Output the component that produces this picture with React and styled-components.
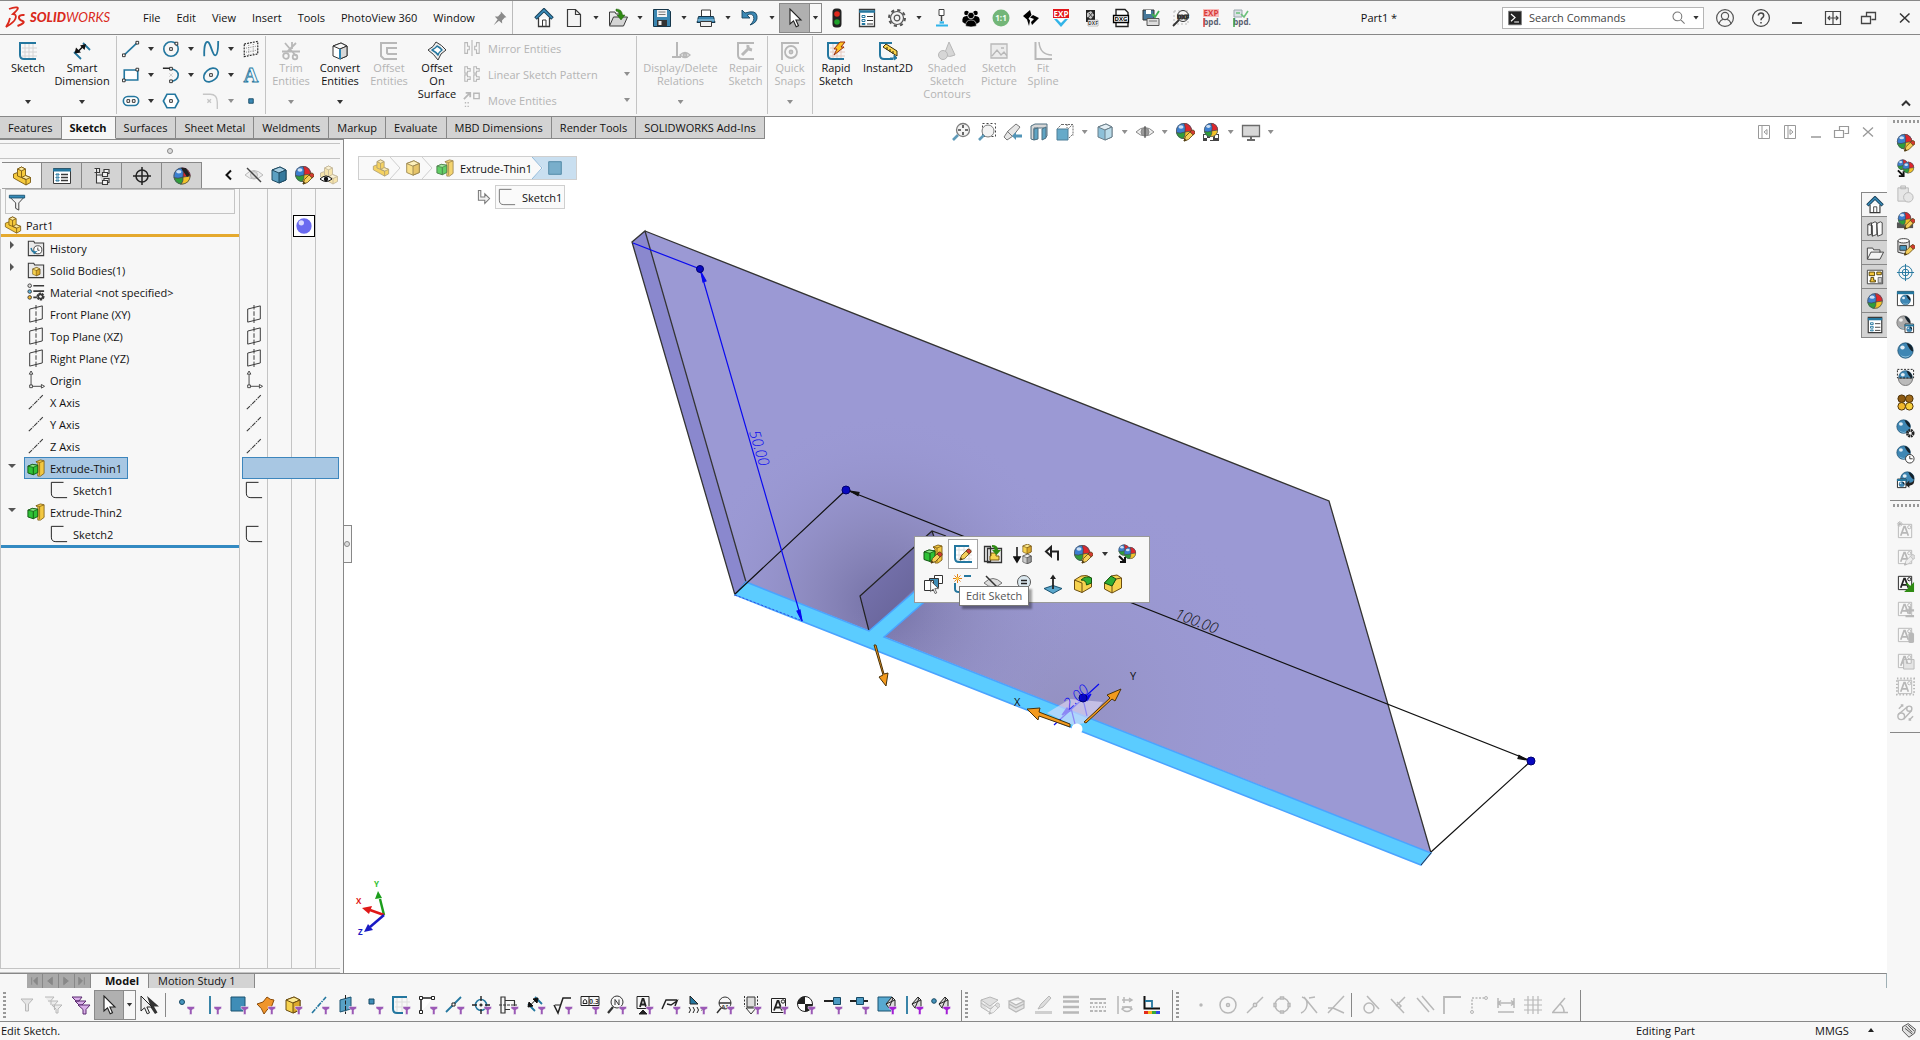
import React from 'react';
import styled, { createGlobalStyle } from 'styled-components';

const ink = '#3a3a3a';
const blue = '#24779f';
const grey = '#b8b8b8';

/* ---------- shared icon parts ---------- */

const Funnel = ({ color = '#9b59b6' }) => (
  <path d="M12 11.5h7.5v2L17 15v4.5h-2.5V15L12 13.5z" fill={color} stroke="#f7f7f7" strokeWidth=".5" />
);

const Ball = ({ x = 10, y = 10, r = 8 }) => (
  <g transform={`translate(${x} ${y}) scale(${r / 8})`}>
    <circle r="8" fill="#3b7fd0" />
    <path d="M0 -8A8 8 0 0 1 8 0L1 1Q2 -4 0 -8Z" fill="#e0262c" />
    <path d="M-7.8 1.5Q-4 3 1 1Q1.5 5 -1 8A8 8 0 0 1 -7.8 1.5Z" fill="#2f9e3a" />
    <path d="M1 1L8 0A8 8 0 0 1 -1 8Q1.5 5 1 1Z" fill="#f2c329" />
    <path d="M0 -8Q2 -4 1 1Q-4 3 -7.8 1.5M1 1L8 0M1 1Q1.5 5 -1 8" fill="none" stroke="#444" strokeWidth=".7" />
    <circle r="7.6" fill="none" stroke="#555" strokeWidth=".8" />
    <ellipse cx="-3" cy="-4" rx="2.5" ry="1.7" fill="#fff" opacity=".75" />
  </g>
);

const BlueBall = ({ x = 10, y = 10, r = 8, color = '#3f87b4', edge = '#1d4f70' }) => (
  <g transform={`translate(${x} ${y}) scale(${r / 8})`}>
    <circle r="7.6" fill={color} stroke={edge} strokeWidth=".8" />
    <path d="M1 -7.5A7.6 7.6 0 0 1 7.5 1Q4 0 1 -7.5Z" fill="#14212b" />
    <path d="M-5.5 4Q0 8 5.5 4Q3 7 0 7T-5.5 4Z" fill="#8fc1dc" />
    <ellipse cx="-3" cy="-3" rx="2.2" ry="2" fill="#fff" opacity=".85" />
  </g>
);

const Pencil = ({ x = 0, y = 0, dim }) => (
  <g transform={`translate(${x} ${y})`} stroke={dim ? grey : '#5b4310'} strokeWidth=".8">
    <path d="M9 19l1.5-4.5 6-6 3 3-6 6z" fill={dim ? '#eee' : '#f5cf5b'} />
    <path d="M15 10l1.8-1.8q1-.8 2.5.6t.7 2.4L18.2 13z" fill={dim ? '#ddd' : '#d23b32'} />
    <path d="M9 19l.7-2.2 1.6 1.6z" fill={dim ? grey : '#222'} />
  </g>
);

const Cube = ({ top = '#fde98f', left = '#f6d24f', right = '#dba92b', edge = '#6b4d12', x = 0, y = 0, s = 1 }) => (
  <g transform={`translate(${x} ${y}) scale(${s})`} stroke={edge} strokeWidth="1" strokeLinejoin="round">
    <path d="M3 5l8-3 6 3v10l-7 3-7-3z" fill={left} />
    <path d="M3 5l8-3 6 3-7 3z" fill={top} />
    <path d="M10 8l7-3v10l-7 3z" fill={right} />
  </g>
);

const PartShape = ({ faded }) => (
  <g stroke={faded ? '#9a8650' : '#7b5a12'} strokeWidth=".9" strokeLinejoin="round" opacity={faded ? 0.8 : 1}>
    <path d="M1.5 8l4-1.5V3l4-2 4 2v6.500l5 2v5l-4.500 2.500L1.500 12z" fill="#f5c93c" />
    <path d="M5.500 3l4-2 4 2-4 1.800zM9.500 11.500l4-2 5 2-4.500 2z" fill="#fdeaa0" />
    <path d="M9.500 4.800v6.700l4.500 2V19M5.500 6.500V10l4 1.500" fill="none" />
  </g>
);

const Extrude = ({ faded }) => (
  <g strokeLinejoin="round" opacity={faded ? 0.75 : 1}>
    <path d="M10 3l5-2 4 1v14l-4 3h-3V5z" fill="#f3c842" stroke="#7b5a12" strokeWidth=".9" />
    <path d="M10 3l4 1 5-2M14 4v14" fill="none" stroke="#7b5a12" strokeWidth=".8" />
    <path d="M1 8l5-2 6 1v8l-5 2.5-6-2z" fill="#2fc136" stroke="#10540f" />
    <path d="M1 8l5-2 6 1-5 2.2z" fill="#8ceb88" stroke="#10540f" strokeWidth=".8" />
    <path d="M7 9.2v8.3" stroke="#10540f" />
  </g>
);

const NoteBox = ({ color = grey, fill = 'none' }) => (
  <g fill={fill} stroke={color}>
    <path d="M2.5 3.5h14v14h-14z" />
    <path d="M5 15.5L8.5 6h1l3.5 9.5M6.5 12.5h5" strokeWidth="1.8" fill="none" />
    <circle cx="14" cy="6.5" r="1.7" />
  </g>
);

const Letters = ({ x, y, size = 7, color = ink, children }) => (
  <text x={x} y={y} fontSize={size} fontWeight="700" fill={color} textAnchor="middle">
    {children}
  </text>
);

const cursorPath = 'M5 1v15l3.5-3.2 2.7 6 2.3-1-2.6-5.8H16z';

const icons = {
  home: (
    <g fill="none" stroke={ink}>
      <path d="M4.5 10v8.5h11V10" fill="#fff" strokeWidth="1.3" />
      <path d="M8.5 18v-6H12v6" />
      <path d="M1.5 10.5L10 2l8.5 8.5" stroke="#173f58" strokeWidth="3.6" />
      <path d="M2 10l8-7.8 8 7.8" stroke="#3b8fbd" strokeWidth="1.6" />
    </g>
  ),
  file: <path d="M3.500 1.5h8l5 5v12h-13zM11.500 1.5v5h5" fill="#f4f4f4" stroke={ink} strokeWidth="1.2" />,
  open: (
    <g stroke={ink} strokeLinejoin="round">
      <path d="M1.500 17V4H7l1 2h5v3" fill="#e6e6e6" />
      <path d="M1.500 18l4-9h14l-4 9z" fill="#d5d5d5" />
      <path d="M8 1q6 0 6.500 6H17l-4 5-4-5h2.500Q11 3.500 8 3z" fill="#2f8b13" stroke="#1c5a08" strokeWidth=".5" />
    </g>
  ),
  save: (
    <g>
      <path d="M1.500 1.500h15l2 2v15h-17z" fill="#3a86b1" stroke="#16364a" />
      <path d="M5 2h10v7H5z" fill="#f3f3f3" />
      <path d="M6.500 4h7M6.500 6.500h7" stroke="#777" />
      <path d="M5 12h10v6H5z" fill="#333" />
      <path d="M6.500 13h3v4h-3z" fill="#eee" />
    </g>
  ),
  print: (
    <g stroke={ink}>
      <path d="M5.500 8V2h9v6" fill="#fff" />
      <path d="M2.500 8.500h15l1.500 6H1z" fill="#3a86b1" stroke="#16364a" />
      <path d="M4.500 13.500h11v5h-11z" fill="#f1f1f1" />
      <path d="M1 12h18" stroke="#a6d2e8" />
    </g>
  ),
  undo: <path d="M2 2v8h8L7.200 7.200Q12 4.500 13.500 8.500T10 17q8-2.500 7-9T5 5z" fill="#3b89b6" stroke="#16445f" strokeWidth=".9" />,
  cursor: <path d={cursorPath} fill="#fff" stroke="#222" strokeWidth="1.100" />,
  cursors: (
    <g>
      <path d="M7 1l12 10.500h-5l3.500 6-2.500 1.500-4-6z" fill="#333" />
      <path d={cursorPath} fill="#eee" stroke="#222" transform="translate(-4 0)" />
    </g>
  ),
  lights: (
    <g>
      <rect x="5.500" y=".5" width="9" height="19" rx="3.500" fill="#222" />
      <circle cx="10" cy="6" r="2.800" fill="#e0281c" />
      <circle cx="10" cy="14" r="2.800" fill="#1fa12a" />
    </g>
  ),
  list: (
    <g fill="none" stroke={ink}>
      <path d="M2.500 1.500h15v17h-15z" fill="#fff" strokeWidth="1.300" />
      <path d="M2 3.500h16" stroke={blue} strokeWidth="2.500" />
      <path d="M5 7.500h3v2H5zM5 11.500h3v2H5zM5 15.500h3v1H5z" stroke={blue} />
      <path d="M10 8.500h6M10 12.500h6M10 16h6" />
    </g>
  ),
  gear: (
    <g fill="none" stroke="#555">
      <circle cx="10" cy="10" r="8" strokeWidth="2" strokeDasharray="3.200 3.080" />
      <circle cx="10" cy="10" r="6.500" fill="#f4f4f4" strokeWidth="1.200" />
      <circle cx="10" cy="10" r="2.800" strokeWidth="1.200" />
    </g>
  ),
  press: (
    <g>
      <path d="M8 1.500h5v6H8z" fill="#fff" stroke="#444" />
      <path d="M10.500 8v5" stroke="#444" strokeWidth="1.500" />
      <path d="M8 13h5v3H8z" fill="#b7dff2" />
      <path d="M5 17.500h12M9 14.500h4" stroke="#2fb4ea" strokeWidth="2" />
    </g>
  ),
  people: (
    <g fill="#000">
      <circle cx="5.500" cy="5" r="2.300" /><circle cx="14.500" cy="5" r="2.300" />
      <path d="M1.500 14q-1-6 4-6h9q5 0 4 6l-3 2h-11z" />
      <circle cx="10" cy="7.500" r="3.300" stroke="#f7f7f7" strokeWidth=".8" />
      <path d="M4.500 18q0-6 5.500-6t5.500 6q-5.500 2-11 0z" stroke="#f7f7f7" strokeWidth=".6" />
    </g>
  ),
  oneToOne: (
    <g>
      <circle cx="10" cy="10" r="8.500" fill="#73b678" />
      <Letters x="10" y="13" size="8" color="#f4fff4">1:1</Letters>
    </g>
  ),
  sparrow: (
    <g fill="#000">
      <path d="M2 8l7-6 1.500 5-3 3.500 1.500 2L8 18l-2-6.500z" />
      <path d="M9 9.500L12 7l6 3-7 7-1-3 3-3z" />
    </g>
  ),
  exp: (
    <g>
      <path d="M2 1h16v9H2z" fill="#e3161b" />
      <Letters x="10" y="8.500" size="8" color="#fff">EXP</Letters>
      <path d="M3 11h14l-7 8z" fill="#32b4e8" />
      <path d="M6 11h8l-4 4z" fill="#fff" />
    </g>
  ),
  sheetDoc: (
    <g>
      <path d="M5 2h9v12H5z" fill="#222" />
      <path d="M6 5l4-2 3 4-3 4-4-2z" fill="#c5c5c5" />
      <path d="M8 5l4 5M12 4l-5 6" stroke="#444" />
      <path d="M7 12h10v6H7z" fill="#fff" stroke="#999" strokeWidth=".6" />
      <Letters x="12" y="17" size="5">DXF</Letters>
    </g>
  ),
  dwgDoc: (
    <g>
      <path d="M5 1.500h9l3 3v14H5z" fill="#fff" stroke="#222" strokeWidth="1.400" />
      <path d="M2.500 7.500h15v7h-15z" fill="#fff" stroke="#000" strokeWidth="1.300" />
      <Letters x="10" y="13" size="6" color="#000">DXG</Letters>
    </g>
  ),
  saveCheck: (
    <g>
      <path d="M2 2h11v10H2z" fill="#47799b" stroke="#333" />
      <path d="M5 2h5v4H5z" fill="#fff" />
      <path d="M6 10.500h12v7H6z" fill="#ddd" stroke="#555" />
      <path d="M8 13h8" stroke="#777" />
      <path d="M11 6l3 3 4-6" fill="none" stroke="#3fae52" strokeWidth="1.800" />
    </g>
  ),
  dxfSearch: (
    <g fill="none" stroke="#333">
      <path d="M3 3h14v13H3z" stroke="#bbb" strokeDasharray="2 2" />
      <circle cx="12" cy="8" r="5.500" fill="#f7f7f7" />
      <path d="M8 12l-6 6" strokeWidth="1.800" />
      <Letters x="12" y="10.500" size="6">DXF</Letters>
    </g>
  ),
  expBpd: (
    <g>
      <path d="M2 1h16v8H2z" fill="#f8b9b9" />
      <Letters x="10" y="8" size="8" color="#d83b3b">EXP</Letters>
      <Letters x="11" y="17" size="8" color="#5a6070">bpd.</Letters>
      <path d="M3 10v9" stroke="#d44" strokeWidth="1.500" />
    </g>
  ),
  checkBpd: (
    <g>
      <path d="M3 2h8v7H3z" fill="#dbe1e5" stroke="#9aa6ad" />
      <path d="M10 6l3 3 4-6M5 5h4" fill="none" stroke="#6cc17b" strokeWidth="1.600" />
      <Letters x="11" y="17" size="8" color="#5a6070">bpd.</Letters>
      <path d="M3 10v9" stroke="#3aa04a" strokeWidth="1.500" />
    </g>
  ),
  pin: <path d="M11 2l7 7-2 .5-3.500 3.500.2 4-4-3.700L2 19l5-7.200L3.500 8l4 .2L11 4.500z" fill="#8a8a8a" />,
  user: (
    <g fill="none" stroke="#555" strokeWidth="1.200">
      <circle cx="10" cy="10" r="8.400" />
      <circle cx="10" cy="8" r="3.600" />
      <path d="M4 16q1-4 4-4.500M16 16q-1-4-4-4.500" />
    </g>
  ),
  help: (
    <g fill="none" stroke="#444" strokeWidth="1.500">
      <circle cx="10" cy="10" r="8.400" strokeWidth="1.200" />
      <path d="M7.300 7.500q.4-2.500 2.700-2.500 2.700 0 2.700 2.400 0 1.500-1.500 2.400-1.200.8-1.200 2.500M10 14v1.600" />
    </g>
  ),
  minimize: <path d="M5 15h10" stroke="#444" strokeWidth="2" />,
  resize: <path d="M2.500 3.500h15v13h-15zM10 3.500v13M4.500 10h11M7 8l-2 2 2 2M13 8l2 2-2 2" fill="none" stroke="#444" strokeWidth="1.200" />,
  restore: <path d="M2.500 8.500h9v7h-9zM7.500 8V4.500h9v7h-4" fill="none" stroke="#444" strokeWidth="1.300" />,
  close: <path d="M5 5.500l9.500 9M14.500 5.500l-9.500 9" stroke="#333" strokeWidth="1.500" />,
  terminal: (
    <g>
      <path d="M2 1.500h16v17H2z" fill="#222" stroke="#777" />
      <path d="M5 5l5 4.500L5 14M9 15h6" fill="none" stroke="#fff" strokeWidth="1.500" />
    </g>
  ),
  search: <path d="M12 12l5 5M13.500 8a5.500 5.500 0 1 1-11 0a5.500 5.500 0 1 1 11 0z" fill="none" stroke="#777" strokeWidth="1.300" />,
  chevronUp: <path d="M6 12.500l4-4 4 4" fill="none" stroke="#333" strokeWidth="2" />,
  chevronLeft: <path d="M12 5.500L7.500 10l4.500 4.500" fill="none" stroke="#111" strokeWidth="2" />,

  /* ribbon */
  sketch: (
    <g fill="none">
      <path d="M7 3v14M11 3v14M15 3v14M4 7h15M4 11h15M4 15h15" stroke="#d4d4d4" />
      <path d="M18 2H2v12q0 4 4 4h12" stroke={blue} strokeWidth="2" />
    </g>
  ),
  smartDim: (
    <g fill="none">
      <path d="M2 11l7 7M11 2l7 7" stroke={blue} strokeWidth="1.800" />
      <path d="M5 11.500l7-7" stroke="#111" strokeWidth="1.600" />
      <path d="M2.500 12.500l1.500-6 5 5zM14 3L8 4.500 12.500 9z" fill="#111" />
    </g>
  ),
  line: (
    <g fill="#fff" stroke="#222">
      <path d="M2 17L17 3" stroke={blue} strokeWidth="1.800" />
      <path d="M.5 15.500h3v3h-3zM15.500 1.500h3v3h-3z" />
    </g>
  ),
  circle: (
    <g fill="none" stroke="#222">
      <circle cx="10" cy="10" r="8" stroke={blue} strokeWidth="1.800" />
      <path d="M8.500 8.500h3v3h-3zM14.500 2.500h3v3h-3z" fill="#fff" />
    </g>
  ),
  spline: <path d="M2.500 18C2 4 5 0 7.500 3S12 17 14.500 17 18 12 18 1" fill="none" stroke={blue} strokeWidth="2" />,
  planeGrid: (
    <g fill="none" stroke="#222">
      <path d="M2.500 4.500l15-3v14l-15 3z" strokeWidth="1.300" strokeDasharray="2 1.300" />
      <path d="M7.500 3v15M12.500 2v15M2 9.500l16-3M2 14l16-3" stroke="#777" strokeDasharray="1 1.500" />
    </g>
  ),
  rect: (
    <g fill="#fff" stroke="#222">
      <path d="M2.500 4.500h15v11h-15z" stroke={blue} strokeWidth="1.800" />
      <path d="M.5 14.500h3v3h-3zM15.500 2.500h3v3h-3z" />
    </g>
  ),
  arc: (
    <g fill="none" stroke="#222">
      <path d="M1 2.500h8" strokeWidth="1.600" />
      <path d="M10 3q8 1.500 8 7t-8 7.500" stroke={blue} strokeWidth="1.800" />
      <path d="M8.500 1.500h3v3h-3zM8.500 15.500h3v3h-3z" fill="#fff" />
      <path d="M8 8l4 4M12 8l-4 4" stroke="#ccc" />
    </g>
  ),
  ellipse: (
    <g fill="none" stroke="#222">
      <ellipse cx="10" cy="10" rx="9" ry="6.500" transform="rotate(-40 10 10)" stroke={blue} strokeWidth="1.800" />
      <path d="M8.500 8.500h3v3h-3z" fill="#fff" />
    </g>
  ),
  textA: (
    <text x="10" y="18" textAnchor="middle" fontFamily="'Liberation Serif', serif" fontSize="23" fontWeight="700" fill="#f4fafd" stroke={blue} strokeWidth=".9">
      A
    </text>
  ),
  slot: (
    <g fill="#fff" stroke="#222">
      <rect x="1.500" y="5" width="17" height="10" rx="5" stroke={blue} strokeWidth="1.800" />
      <path d="M5.500 8.500h3v3h-3zM11.500 8.500h3v3h-3z" />
    </g>
  ),
  polygon: (
    <g fill="#fff" stroke="#222">
      <path d="M5.500 2.500h9l4 7.500-4 7.500h-9L1.500 10z" stroke={blue} strokeWidth="1.800" />
      <path d="M8.500 8.500h3v3h-3z" />
    </g>
  ),
  filletOff: <path d="M1 2.500h8q8 0 8 9V19M6 8l4 4M10 8l-4 4" fill="none" stroke="#c6c6c6" strokeWidth="1.500" />,
  point: <path d="M7.500 7.500h5v5h-5z" fill="#3b89b6" stroke="#174964" />,
  trim: (
    <g fill="none" stroke={grey} strokeWidth="1.800">
      <path d="M4 2l11 13M15 2L6 11M1 10.500h18M11 1v7" />
      <circle cx="5" cy="15" r="2.800" /><circle cx="14" cy="16" r="2.300" />
    </g>
  ),
  convert: (
    <g>
      <Cube top="#f8f8f8" left="#fff" right="#d7d7d7" edge="#333" />
      <path d="M10 8v10" stroke="#2c87b5" strokeWidth="2" />
    </g>
  ),
  offset: <path d="M18 2H2v13l3 3h13M18 7H8v5l1 1h9" fill="none" stroke={grey} strokeWidth="2" />,
  offsetSurface: (
    <g strokeLinejoin="round">
      <path d="M1 9q6-3 8-8 6 3 10 8-6 3-8 10-4-6-10-10z" fill="#eee" stroke={ink} />
      <path d="M5 9q4-2 5-4 3 1.500 5 4-3 2-4 5-2-3-6-5z" fill="#fff" stroke={blue} strokeWidth="1.500" />
    </g>
  ),
  mirror: <path d="M10 1v18M2 4h3v4h2v4H5v4H2zM18 4h-3v4h-2v4h2v4h3z" fill="none" stroke={grey} strokeWidth="1.200" />,
  pattern: (
    <g fill="none" stroke={grey} strokeWidth="1.200">
      <path d="M2 2h3v2h3v3H5v2H2zM12 2h3v2h3v3h-3v2h-3zM2 11h3v2h3v3H5v2H2zM12 11h3v2h3v3h-3v2h-3z" />
    </g>
  ),
  move: (
    <g fill="none" stroke={grey} strokeWidth="1.500">
      <path d="M1 9l6-6M3 2h5v5" strokeWidth="2" /><path d="M12 2.500h6v6h-6z" />
      <path d="M2 13h6M2 17h6" strokeDasharray="1.500 1.500" />
    </g>
  ),
  relations: (
    <g fill="none" stroke={grey} strokeWidth="2">
      <path d="M6 1v15M1 16h9" />
      <path d="M9 14q5-5 10 0-5 5-10 0z" strokeWidth="1.300" fill="#f7f7f7" />
      <circle cx="14" cy="14" r="1.500" />
    </g>
  ),
  repair: (
    <g fill="none" stroke={grey} strokeWidth="2">
      <path d="M18 2H2v12q0 4 4 4h12" />
      <path d="M6 14l7-7M12 4q-1 4 4 5" strokeWidth="3" />
    </g>
  ),
  snaps: (
    <g fill="none" stroke={grey} strokeWidth="1.800">
      <path d="M1 2h18M2 2v17" /><circle cx="11" cy="11" r="6" /><circle cx="11" cy="11" r="1.500" />
    </g>
  ),
  rapid: (
    <g fill="none">
      <path d="M7 3v14M11 3v14M15 3v14M4 7h15M4 11h15M4 15h15" stroke="#e6c9c0" />
      <path d="M18 2H2v12q0 4 4 4h12" stroke={blue} strokeWidth="2" />
      <path d="M14 1h5l-4 5h3L8 14l3-6H8z" fill="#ffc526" stroke="#9c2b0d" />
    </g>
  ),
  instant: (
    <g fill="none">
      <path d="M14 2H2v12q0 4 4 4h9" stroke={blue} strokeWidth="2" />
      <path d="M5 6l3-3 11 7v5z" fill="#fbd44a" stroke="#3b300c" />
      <path d="M9 6v3M12 8v3M15 10v3" stroke="#3b300c" />
      <path d="M12 17h6M16 14l3 3-3 2z" fill={blue} stroke={blue} />
    </g>
  ),
  shaded: (
    <g fill="#d6d6d6" stroke={grey}>
      <path d="M12 1l6 13q-5 3-11 0z" /><circle cx="6" cy="14" r="4.500" />
    </g>
  ),
  picture: <path d="M2 3h16v14H2zM3 15l5-6 4 5 3-3 3 4M12 7h3" fill="#ececec" stroke={grey} strokeWidth="1.300" />,
  fitSpline: (
    <g fill="none" stroke={grey}>
      <path d="M2.500 1v17H19" strokeWidth="2" /><path d="M6 1q1 13 13 13" strokeWidth="1.500" />
    </g>
  ),

  /* heads-up view */
  zoomFit: (
    <g fill="none" stroke="#7d7d7d">
      <circle cx="12" cy="8" r="6.500" fill="#f3f3f3" strokeWidth="1.300" />
      <path d="M12 3v3M12 10v3M7 8h3M14 8h3" stroke="#444" strokeWidth="1.600" />
      <path d="M7 13l-5 5" stroke="#5f9ab8" strokeWidth="2.600" />
    </g>
  ),
  zoomArea: (
    <g fill="none" stroke="#7d7d7d">
      <path d="M5.500 1.500h13v13h-13z" stroke="#444" strokeDasharray="2 2" />
      <circle cx="11" cy="9" r="6" fill="#f3f3f3" />
      <path d="M7 13l-5 5" stroke="#5f9ab8" strokeWidth="2.600" />
    </g>
  ),
  prevView: (
    <g stroke="#777">
      <path d="M13 2l4 3-7 9-6 4-3-3 4-6z" fill="#e6e6e6" />
      <path d="M4 9l5 5" />
      <path d="M9 14l4-4v2.500h6v3h-6V18z" fill="#5295b8" stroke="none" />
    </g>
  ),
  section: (
    <g stroke="#4e6f80">
      <path d="M2 4l4-2h12v12l-3 3V6H5v12l-3-1z" fill="#d7d7d7" />
      <path d="M5 7l4-1v11l-4 1zM13 7l4-2v11l-4 2z" fill="#5ea4c4" />
    </g>
  ),
  viewOrient: (
    <g stroke="#6b6b6b">
      <path d="M7 2.500h11v11M18 2l-5 5M12 2v4M7 2L2 7M14 16l4-4" fill="none" strokeDasharray="2 1" />
      <path d="M2 7h11v11H2z" fill="#66aac9" stroke="#4e7f97" />
    </g>
  ),
  displayStyle: <Cube top="#e4eff5" left="#8dc0d8" right="#b9dbe9" edge="#6b7f8a" />,
  eye: (
    <g stroke="#8a8a8a" fill="none">
      <path d="M1 10q9-9 18 0-9 8-18 0z" fill="#eee" />
      <circle cx="10" cy="10" r="4" fill="#999" /><path d="M10 4v12" stroke="#444" />
    </g>
  ),
  ballPencil: <g><Ball x={9} y={9} /><Pencil /></g>,
  ballScene: <g><path d="M2 12h16v7H2z" fill="#444" /><path d="M3 13h3v3H3zM9 15h3v3H9zM6 16h3v3H6zM14 13h3v3h-3z" fill="#fff" /><Ball x={10} y={8} r={7} /></g>,
  monitor: (
    <g stroke="#6b6b6b">
      <path d="M1.500 3.500h17v11h-17z" fill="#d8d8d8" strokeWidth="1.300" /><path d="M10 15v3M6 18h8" strokeWidth="2" />
    </g>
  ),
  paneLeft: <path d="M4.500 3.500h11v13h-11zM8 4v12M13 7.500v5L10 10z" fill="none" stroke="#999" />,
  paneRight: <path d="M4.500 3.500h11v13h-11zM8 4v12M10 7.500v5l3-2.500z" fill="none" stroke="#999" />,
  docMin: <path d="M5 15h10" stroke="#999" strokeWidth="1.500" />,
  docRestore: <path d="M2.500 8.500h9v7h-9zM7.500 8V4.500h9v7h-4" fill="none" stroke="#999" strokeWidth="1.200" />,
  docClose: <path d="M5 5.500l10 9M15 5.500l-10 9" stroke="#999" strokeWidth="1.300" />,

  /* feature tree */
  part: <PartShape />,
  partFaded: <PartShape faded />,
  box: <Cube />,
  boxFaded: <Cube top="#fdf0bb" left="#f9e08a" right="#e6c468" edge="#9a8650" />,
  extrude: <Extrude />,
  extrudeFaded: <Extrude faded />,
  property: (
    <g fill="none" stroke={ink}>
      <path d="M1.500 2.500h17v15h-17z" fill="#fff" /><path d="M1 4h18" stroke={blue} strokeWidth="3" />
      <path d="M4 8h3v1H4zM4 11h3v1H4zM4 14h3v1H4z" stroke={blue} /><path d="M9 8.500h7M9 11.500h7M9 14.500h7" strokeWidth="1.300" />
    </g>
  ),
  config: (
    <path
      d="M4.500 2v15h6M4.500 9h6M2.500 2.500h5v4h-5M10.500 6.500h5v4h-5zM10.500 14.500h5v4h-5zM12 6V3.500h5v4h-1M12 14v-1.500h5v4h-1"
      fill="#f3f3f3"
      stroke={ink}
      strokeWidth="1.100"
    />
  ),
  dimX: (
    <g fill="none" stroke="#222" strokeWidth="1.500">
      <circle cx="10" cy="10" r="6" /><path d="M10 1v18M1 10h18" />
    </g>
  ),
  ball: <Ball r={8.5} />,
  ballDark: <g><Ball r={8.5} /><path d="M9 2l5 0 4 7-3 2z" fill="#222" /></g>,
  hide: (
    <g fill="none" stroke="#bbb">
      <path d="M1 10q9-9 18 0-9 8-18 0z" fill="#eee" /><circle cx="10" cy="10" r="3.500" fill="#ddd" />
      <path d="M3 3l14 14" stroke="#444" strokeWidth="1.400" />
    </g>
  ),
  cubeBlue: <Cube top="#a9d0e4" left="#5ba0c2" right="#35799c" edge="#1f4a61" />,
  partsEye: (
    <g>
      <g opacity=".4"><PartShape /></g>
      <path d="M1 14q6-6 12 0-6 5-12 0z" fill="#fff" stroke="#111" /><circle cx="7" cy="14" r="2.200" fill="#111" />
    </g>
  ),
  filter: (
    <g stroke="#333">
      <path d="M2 4.500h16L12 11v8l-3.500-2v-6z" fill="#f1f1f1" /><path d="M1.500 2.500h17v3h-17z" fill="#348bb8" stroke="#1a5270" />
    </g>
  ),
  history: (
    <g stroke={ink} fill="none">
      <path d="M1.500 18.500v-16h6l1 2h10v14z" fill="#e9e9e9" strokeWidth="1.200" />
      <circle cx="12" cy="12" r="4.500" fill="#fff" /><path d="M12 9.500v3h2" />
      <path d="M4.500 10q1 5 5 4.500l-2 2" stroke={blue} strokeWidth="1.600" />
    </g>
  ),
  bodies: (
    <g>
      <path d="M1.500 18.500v-16h6l1 2h10v14z" fill="#e9e9e9" stroke={ink} strokeWidth="1.200" />
      <Cube x={4.5} y={6} s={0.58} edge="#5a3f0a" />
    </g>
  ),
  material: (
    <g stroke={ink}>
      <circle cx="3" cy="3" r="2" fill="#ddd" /><circle cx="3" cy="9.500" r="2" fill="#5cb2dc" /><circle cx="3" cy="16" r="2" fill="#f2b62c" />
      <path d="M7 3h12M7 9h12M7 16h4" strokeWidth="1.800" />
      <circle cx="15" cy="15" r="3" fill="none" strokeWidth="3" strokeDasharray="2.200 .8" /><circle cx="15" cy="15" r="2.500" fill="none" strokeWidth="1.500" />
    </g>
  ),
  plane: (
    <g fill="none" stroke={ink} strokeWidth="1.100">
      <path d="M3 4.500l14-3.500v14.500L3 19z" /><path d="M10 0v5M10 7v5M10 14v6" />
    </g>
  ),
  origin: (
    <g fill="none" stroke={ink}>
      <path d="M4.500 3v14h11" /><path d="M4.500 0l2 3.500h-4zM19.500 17L16 19v-4zM3 15.500h3v3H3z" fill="#fff" />
    </g>
  ),
  axis: <path d="M2 18L18 2" stroke={ink} strokeWidth="1.200" strokeDasharray="5 1 1.500 1" />,
  sketchNode: <path d="M15 1.500H1.500v12q0 5 5 5H19" fill="none" stroke="#222" strokeWidth="1.100" />,
  sketchNodeFaded: <path d="M15 1.500H1.500v12q0 5 5 5H19" fill="none" stroke="#777" strokeWidth="1.100" />,
  face: <path d="M3 3h14v14H3z" fill="#79aecb" stroke="#4b84a3" />,
  hookArrow: <path d="M3 2h3v8h5V6l6 6-6 6v-4H3z" fill="#f1f1f1" stroke="#7a7a7a" strokeWidth="1.300" />,

  /* task pane */
  library: <path d="M2 5l4-2v13l-4 1zM6 4l4-2 2 1v13l-5 2zM12 4l4-2 2 1v13l-5 2zM2 5l5 1M7 6v12" fill="#fafafa" stroke={ink} />,
  folder: <path d="M1.500 16.500v-12h6l1 2h7v3M1.500 17l4-8h14l-4 8z" fill="#f2f2f2" stroke={ink} />,
  palette: (
    <g fill="#f5c73c" stroke="#4d3b06">
      <path d="M1.500 2.500h17v15h-17z" fill="#fff" stroke={ink} /><path d="M3.500 4.500h6v4h-6zM12 4.500h5v3h-5zM5.500 10.500h3v3h2v2h-6v-2h1z" />
      <path d="M13.500 10.500h4v6h-4z" fill="#ccc" stroke="#666" />
    </g>
  ),

  /* render tools */
  ballsArrow: <g><Ball x={7} y={6} r={5.5} /><Ball x={13} y={9} r={6} /><path d="M2 12l5 5M8 13v5H3" fill="none" stroke="#111" strokeWidth="2" /></g>,
  pasteOff: <g fill="#e6e6e6" stroke={grey}><path d="M2 3h11v14H2zM5 1h5v3H5z" /><circle cx="13" cy="13" r="5" /></g>,
  scenePencil: <g><path d="M1 12h17v6H1z" fill="#555" /><Ball x={9} y={8} r={7} /><Pencil /></g>,
  decalPencil: (
    <g stroke={ink}>
      <path d="M2 4v12q6 3 12 0V4" fill="#ddd" /><ellipse cx="8" cy="4" rx="6" ry="2.300" fill="#fff" /><path d="M4 9h7v5H4z" fill="#4794bb" /><Pencil />
    </g>
  ),
  target: (
    <g fill="none" stroke={blue}>
      <circle cx="10" cy="10" r="7" /><circle cx="10" cy="10" r="3.500" /><path d="M10 1v18M1 10h18" />
    </g>
  ),
  previewWin: <g><path d="M1.500 2.500h17v15h-17z" fill="#fff" stroke={ink} /><path d="M1 4h18" stroke={blue} strokeWidth="3" /><BlueBall y={11.5} r={5.5} /></g>,
  ballWin: <g><BlueBall x={8} y={8} r={7.5} color="#aaa" edge="#666" /><path d="M9.500 9.500h9v9h-9z" fill="#fff" stroke={ink} /><path d="M9 11h10" stroke={blue} strokeWidth="2" /><BlueBall x={14} y={15} r={3} /></g>,
  blueBall: <BlueBall r={8.5} />,
  halfBall: <g><BlueBall y={11} r={7.5} /><path d="M2.500 12h15a7.500 7.500 0 0 1-15 0z" fill="#bbb" stroke="#777" /><path d="M1.500 2.500h17v9h-17z" fill="none" stroke="#222" strokeDasharray="2 1.500" /></g>,
  fourBalls: (
    <g stroke="#4a2e05">
      <circle cx="6" cy="6" r="4" fill="#8d5a12" /><circle cx="14" cy="6" r="4" fill="#a06a1a" />
      <circle cx="6" cy="14" r="4" fill="#f0b72c" /><circle cx="14" cy="14" r="4" fill="#f7cf3c" />
    </g>
  ),
  ballGear: <g><BlueBall x={8} y={8} r={7.5} /><circle cx="15" cy="15" r="3" fill="none" stroke="#222" strokeWidth="3" strokeDasharray="1.800 .6" /></g>,
  ballClock: <g><BlueBall x={8} y={8} r={7.5} /><circle cx="14.500" cy="14.500" r="4.500" fill="#fff" stroke="#333" /><path d="M14.500 11.500v3h3" fill="none" stroke="#333" /></g>,
  ballBack: <g><BlueBall x={12} y={8} r={7.5} /><path d="M1.500 8.500h9v9h-9z" fill="#fff" stroke="#222" /><path d="M1 9.500h10" stroke={blue} strokeWidth="2" /><BlueBall x={6} y={14} r={3} /><path d="M10 14l4-4v2.500q4 0 5-3.500 1 6-5 6.500V18z" fill="#222" /></g>,

  noteNew: <g><NoteBox /><path d="M1 3h6M4 0v6M2 1l4 4M6 1L2 5" stroke={grey} /></g>,
  noteEdit: <g><NoteBox /><Pencil dim /></g>,
  noteArrow: <g><NoteBox color="#222" /><path d="M11 11l5 5M18 12v7h-7z" fill="#2f8b13" stroke="#2f8b13" strokeWidth="2" /></g>,
  notePlus: <g><NoteBox /><path d="M10 12h9M14.500 8v8M10 18h9" stroke={grey} strokeWidth="2.500" /></g>,
  noteLights: <g><NoteBox /><rect x="13" y="8" width="6" height="11" rx="2" fill={grey} /></g>,
  noteSave: <g><NoteBox /><path d="M8 9h11v10H8zM11 9v4h5V9" fill="#e4e4e4" stroke={grey} /></g>,
  noteBorder: <g><NoteBox /><path d="M1 1.500h18v17H1z" fill="none" stroke={grey} strokeWidth="2" strokeDasharray="1.500 2" /></g>,
  belt: (
    <g fill="none" stroke={grey} strokeWidth="1.500">
      <circle cx="5.500" cy="14" r="3.500" /><circle cx="14" cy="6" r="2.700" /><path d="M3 11.500L12 4M8 17l8.500-9M3 6l4-4M14 18l4-4M5 2h2v2M14 16v2h2" />
    </g>
  ),

  /* selection filters */
  funnelOff: <path d="M4 4h12l-4.500 5v7h-3V9z" fill="#e5e5e5" stroke={grey} />,
  funnelsOff: <path d="M1 2h9L7 5.500V10M4 6h10l-3.500 4v5M8 10h10l-4 4v4h-2v-4z" fill="#ececec" stroke={grey} />,
  funnelsOn: <g fill="#d9aee8" stroke="#5b2b70"><path d="M1 2h10l-3 4H5zM4 6h11l-4 4H8z" /><path d="M7 10h12l-4 4.500V19h-3v-4.500z" /></g>,
  fVertex: <g><circle cx="7" cy="7" r="2.500" fill="#4795bd" stroke="#174964" /><Funnel /></g>,
  fEdge: <g><path d="M8 1v18" stroke={blue} strokeWidth="1.800" /><Funnel /></g>,
  fFace: <g><path d="M2 2h14v14H2z" fill="#3f8db7" stroke="#1a5270" /><Funnel /></g>,
  fSurface: <g><path d="M1 9l6-2 4-5q3 3 7 3l-3 8q-3 0-4 2l-3 4q-2-6-7-10z" fill="#f0952a" stroke="#8a4a08" /><Funnel /></g>,
  fSolid: <g><Cube /><Funnel /></g>,
  fAxis: <g><path d="M2 18L16 2" stroke={blue} strokeWidth="1.600" strokeDasharray="5 1 1.500 1" /><Funnel /></g>,
  fPlane: <g><path d="M3 5l11-3v12L3 17z" fill="#58a1c5" stroke="#1a5270" /><path d="M8.500 0v19" stroke="#222" strokeDasharray="4 1.500" /><Funnel /></g>,
  fPoint: <g><path d="M5 4h5v5H5z" fill="#3f8db7" stroke="#174964" /><Funnel /></g>,
  fSketch: <g fill="none"><path d="M6 3v14M11 3v14M16 3v14M4 7h15M4 12h15" stroke="#ddd" /><path d="M16 2H2v12q0 4 4 4h6" stroke={blue} strokeWidth="2" /><Funnel /></g>,
  fSegment: <g fill="#fff" stroke="#222"><path d="M3 17V3h12" strokeWidth="1.500" /><path d="M1.500 15.500h3v3h-3zM1.500 1.500h3v3h-3zM13.500 1.500h3v3h-3z" /><Funnel /></g>,
  fMidpoint: <g fill="#fff" stroke="#222"><path d="M1 17L16 2" stroke={blue} strokeWidth="1.800" /><path d="M7 8h3v3H7z" /><Funnel /></g>,
  fCenter: <g fill="none" stroke="#222"><circle cx="9" cy="10" r="5.500" stroke={blue} strokeWidth="1.500" /><path d="M9 1v5M9 14v5M0 10h5M13 10h5M7.500 10h3M9 8.500v3" strokeWidth="1.400" /><Funnel /></g>,
  fCenterline: <g fill="none" stroke="#333"><path d="M2 2h4v16H2zM6 5.500h10M6 14.500h5M15.500 6v5" strokeWidth="1.200" /><path d="M0 10h18" strokeDasharray="3 1" /><Funnel /></g>,
  fDim: <g fill="none"><path d="M2 9l7 7M9 2l7 7" stroke={blue} strokeWidth="1.800" /><path d="M4 10.500l6-6M2 12l1-5 4 4zM12 3L7 4l4 4z" fill="#111" stroke="#111" /><Funnel /></g>,
  fRough: <g fill="none"><path d="M1 10l4 8L10 3h8" stroke="#222" strokeWidth="1.500" /><path d="M2 10h6" stroke="#222" /><Funnel /></g>,
  fGtol: <g fill="none" stroke="#222"><path d="M1 1.500h18v9H1zM9 1.500v9M3 8.500q0-4 2-4t2 4z" /><g stroke="none"><Letters x="14" y="9" size="7">0.3</Letters></g><Funnel /></g>,
  fNote: <g fill="none" stroke="#333"><circle cx="10" cy="7" r="6" /><path d="M8 10V4.500l4 5.500V4.500" /><path d="M6 12l-5 6" strokeWidth="2.200" /><Funnel /></g>,
  fDatum: <g fill="none" stroke="#222"><path d="M3 1.500h12v12H3z" /><path d="M6 12l2.500-8h1L12 12M7 9.500h4" strokeWidth="1.800" /><path d="M5 19l4-4 4 4z" fill="#222" /><Funnel /></g>,
  fWeld: <g fill="none" stroke="#222"><path d="M1 14l4-9h11M6 9l4 1 6-4-2 5" strokeWidth="1.500" /><Funnel /></g>,
  fBead: <g fill="none" stroke="#222"><path d="M2 1v8h8z" fill={blue} /><path d="M1 12q3 3 0 6M5 12q3 3 0 6M9 12q3 3 0 6M13 12q2 2 1 4" /><Funnel /></g>,
  fDatumTarget: <g fill="none" stroke="#333"><circle cx="10" cy="8" r="6" /><path d="M4 8h12M6 13l-4 5" strokeWidth="1.500" /><g stroke="none"><Letters x="10" y="14" size="6">A1</Letters></g><Funnel /></g>,
  fThread: <g fill="none" stroke="#333"><path d="M5 2h8v10H5z" fill="#ddd" /><path d="M2.500 1v11M15.500 1v11" strokeDasharray="2 1.500" /><path d="M4 13h10l-5 6z" /><Funnel /></g>,
  fBlock: <g><NoteBox color="#222" /><Funnel /></g>,
  fMass: <g><circle cx="9" cy="9" r="7.500" fill="#fff" stroke="#222" /><path d="M9 9V1.500A7.500 7.500 0 0 0 1.500 9zM9 9v7.500A7.500 7.500 0 0 0 16.500 9z" fill="#222" /><Funnel /></g>,
  fRoute: <g><path d="M1 6h10" stroke="#222" strokeWidth="2" /><path d="M10.500 2.500h7v7h-7z" fill="#4a99c2" stroke="#174964" /><Funnel /></g>,
  fRoute2: <g><path d="M0 6h18" stroke="#222" strokeWidth="2" /><path d="M6.500 2.500h7v7h-7z" fill="#4a99c2" stroke="#174964" /><Funnel /></g>,
  fMeshFace: <g><path d="M1 2h14v14H1z" fill="#58a9d0" stroke="#1a5270" /><path d="M9 9l6-7 3 3v7l-6 1z" fill="#ddd" stroke="#222" /><path d="M9 9l9-4M12 13l4-10" stroke="#222" /><Funnel color="#a31fd6" /></g>,
  fMeshEdge: <g><path d="M3 1v18" stroke={blue} strokeWidth="1.800" /><path d="M8 9l6-7 3 3v7l-6 1z" fill="#ddd" stroke="#222" /><path d="M8 9l9-4M11 13l4-10" stroke="#222" /><Funnel color="#a31fd6" /></g>,
  fMeshVertex: <g><circle cx="3" cy="6" r="2.300" fill="#4795bd" stroke="#174964" /><path d="M8 9l6-7 3 3v7l-6 1z" fill="#ddd" stroke="#222" /><path d="M8 9l9-4M11 13l4-10" stroke="#222" /><Funnel color="#a31fd6" /></g>,

  /* line format and snaps */
  layerPen: <g><path d="M1 5l9-3 8 3-8 6zM1 8l9 6 5-3M1 5v7l8 5" fill="#e0e0e0" stroke={grey} /><Pencil dim /></g>,
  layers: <path d="M2 6l9-3 6 3-8 4zM2 6v7l7 4 8-4V6M2 9l7 4 8-4" fill="#e3e3e3" stroke={grey} strokeWidth="1.200" />,
  lineColor: <g><path d="M4 14l3-5 8-8 2 2-8 9z" fill="#ddd" stroke={grey} /><path d="M1 17.500h17" stroke="#cfcfcf" strokeWidth="3" /></g>,
  lineWeight: <path d="M2 2h16M2 6.500h16M2 12h16M2 17.500h16" stroke={grey} strokeWidth="2.600" />,
  lineStyle: <g stroke={grey} strokeWidth="2"><path d="M2 4h16" /><path d="M2 8h16M2 16h16" strokeDasharray="3 1.500" /><path d="M2 12h16" strokeDasharray="1.500 1.500" /></g>,
  edgeShow: <g fill="none" stroke={grey} strokeWidth="1.500"><path d="M3 1v18M7 5h9M9 2v6M7 12h10M14 3l3 2-3 2" /><path d="M7 14q5-4 10 0-5 5-10 0z" /></g>,
  colorMode: (
    <g fill="none">
      <path d="M2.500 1v12.500H18" stroke="#111" strokeWidth="2" /><path d="M3 6h7v7" stroke={blue} strokeWidth="1.800" />
      <path d="M2 17.500h4" stroke="#e32b1d" strokeWidth="3" /><path d="M6 17.500h4" stroke="#f5b51d" strokeWidth="3" />
      <path d="M10 17.500h4" stroke="#36a83a" strokeWidth="3" /><path d="M14 17.500h4" stroke="#3048e0" strokeWidth="3" />
    </g>
  ),
  sPoint: <circle cx="10" cy="10" r="1.700" fill={grey} />,
  sCenter: <g fill="none" stroke={grey} strokeWidth="1.500"><circle cx="10" cy="10" r="8" /><circle cx="10" cy="10" r="1.500" /></g>,
  sMid: <g stroke={grey} strokeWidth="1.500" fill="#eee"><path d="M2 18L18 2" /><circle cx="10" cy="10" r="1.700" /></g>,
  sQuad: <g stroke={grey} strokeWidth="1.400" fill="none"><circle cx="10" cy="10" r="7" /><path d="M8.500 2h3v2h-3zM8.500 16h3v2h-3zM2 8.500h2v3H2zM16 8.500h2v3h-2z" fill="#eee" /></g>,
  sIntersect: <path d="M3 2q6 2 5 8t-6 8M5 2l13 16M10 3l6-1" fill="none" stroke={grey} strokeWidth="1.500" />,
  sNearest: <path d="M2 18L18 1M7 13l11 5M2 13h6" fill="none" stroke={grey} strokeWidth="1.500" />,
  sTangent: <g fill="none" stroke={grey} strokeWidth="1.500"><circle cx="8" cy="13" r="5" /><path d="M6 1l12 13" /></g>,
  sPerp: <path d="M3 4l13 14M17 2L8 11M9 7l4 4-2 2" fill="none" stroke={grey} strokeWidth="1.500" />,
  sParallel: <path d="M2 3l12 14M7 1l12 14" stroke={grey} strokeWidth="1.500" />,
  sHV: <path d="M2 19V2h17" fill="none" stroke={grey} strokeWidth="1.800" />,
  sHVPoints: <g fill="#eee" stroke={grey}><path d="M3 17V3h13" fill="none" strokeWidth="1.500" strokeDasharray="2 1.500" /><circle cx="3" cy="17" r="1.500" /><circle cx="17" cy="3" r="1.500" /></g>,
  sLength: <path d="M2 3v10M18 3v10M2 8h16M5 5.500L2 8l3 2.500M15 5.500L18 8l-3 2.500M2 17h16" fill="none" stroke={grey} strokeWidth="1.500" />,
  sGrid: <path d="M5 1v18M10 1v18M15 1v18M1 5h18M1 10h18M1 15h18" stroke={grey} strokeWidth="1.200" />,
  sAngle: <path d="M2 17.500h16M3 17L15 3M10 9q4 3 4 8" fill="none" stroke={grey} strokeWidth="1.500" />,
  tag: <path d="M2 6l7-4 9 7-1 5-7 5-8-8zM5 8l9 7M9 4l7 7M6 5l8 8" fill="#e2e2e2" stroke="#333" />,

  /* context toolbar */
  editFeature: <g><Extrude /><Pencil x={-1} /></g>,
  editSketch: (
    <g fill="none">
      <path d="M6 1v18M11 1v18M16 1v18M3 6h16M3 11h16M3 15h16" stroke="#ddd" />
      <path d="M16 2H2v12q0 4 4 4h13" stroke={blue} strokeWidth="2" /><Pencil x={-2} y={-3} />
    </g>
  ),
  insertPart: (
    <g stroke="#333">
      <path d="M1.500 2.500h6v15h-6zM4.500 4.500h14v14h-14z" fill="#eee" strokeWidth="1.300" />
      <path d="M8 9h5v3h3v4H7v-4h1z" fill="#f7d451" stroke="#7b5a12" />
      <path d="M9 1q6 0 6 5h3l-4.500 5L9 6h2.500q0-3-2.500-3z" fill="#2f8b13" stroke="none" />
    </g>
  ),
  suppress: <g><path d="M4 3v14M1 13l3 5 3-5z" fill="#111" stroke="#111" strokeWidth="1.500" /><Cube x={8} y={-1} s={0.6} /><Cube x={8} y={9} s={0.6} top="#eee" left="#ccc" right="#999" edge="#444" /></g>,
  rollback: <path d="M8 3v9L3 7.500zM7 7.500h8v9" fill="none" stroke="#222" strokeWidth="2" />,
  selectOther: (
    <g stroke="#333">
      <path d="M11.500 1.500h8v8h-8z" fill="#fff" /><path d="M6.500 4.500h9v9h-9z" fill="#3f8db7" />
      <path d="M1.500 6.500h9v10h-9z" fill="#fff" /><path d={cursorPath} fill="#fff" transform="translate(4 6) scale(.72)" />
    </g>
  ),
  newSketch: <g fill="none"><path d="M11 2h7M2 9v6q0 3 4 3h12" stroke={blue} strokeWidth="2" /><path d="M4.500 0v9M0 4.500h9M1.500 1.500l6 6M7.500 1.500l-6 6" stroke="#e0821b" /><circle cx="4.500" cy="4.500" r="1.500" fill="#ffd350" /></g>,
  hideBody: <g fill="none" stroke="#777"><path d="M1 9q9-9 18 0-9 8-18 0z" fill="#ddd" /><path d="M3 2l14 14" stroke="#333" strokeWidth="1.500" /></g>,
  zoomSel: <g fill="none" stroke="#555"><circle cx="11" cy="8" r="6.500" fill="#dce9f0" /><path d="M8 6.500h6M8 9.500h6" stroke="#222" strokeWidth="1.500" /><path d="M6 13l-4 5" strokeWidth="2" /></g>,
  normalTo: <g><path d="M1 14.500l9-3 9 3-9 5z" fill="#5aa7cc" stroke="#1a5270" /><path d="M10 15V3" stroke="#222" strokeWidth="1.800" /><path d="M7 5l3-4.500L13 5z" fill="#222" /></g>,
  fillet: (
    <g stroke="#6b4d12" strokeLinejoin="round">
      <path d="M1.500 6L8 2q6-2 10.500 2v9L9 18.500l-7.500-3z" fill="#f6d24f" />
      <path d="M9 9v9.500M1.500 6L9 9" fill="none" />
      <path d="M8 6q5-5 10.500-2v5l-5 2q0-5-5.500-5z" fill="#2fae35" stroke="#10540f" />
    </g>
  ),
  chamfer: (
    <g stroke="#6b4d12" strokeLinejoin="round">
      <path d="M1.500 9L8 2l6-1 4.500 3v10L9 19l-7.500-4z" fill="#f6d24f" />
      <path d="M9 19v-7l4-7 5.500-1" fill="none" />
      <path d="M1.500 9L8 2l5 3-4 7z" fill="#2fae35" stroke="#10540f" />
    </g>
  ),
};

const Icon = ({ name, size = 20 }) => (
  <svg width={size} height={size} viewBox="0 0 20 20" aria-hidden="true">
    {icons[name]}
  </svg>
);

/* ---------- data ---------- */

const menus = ['File', 'Edit', 'View', 'Insert', 'Tools', 'PhotoView 360', 'Window'];

const quickAccess = [
  { icon: 'home', label: 'Home' },
  { icon: 'file', label: 'New', menu: true },
  { icon: 'open', label: 'Open', menu: true },
  { icon: 'save', label: 'Save', menu: true },
  { icon: 'print', label: 'Print', menu: true },
  { icon: 'undo', label: 'Undo', menu: true },
  { icon: 'cursor', label: 'Select', menu: true, active: true },
  { icon: 'lights', label: 'Rebuild' },
  { icon: 'list', label: 'File Properties' },
  { icon: 'gear', label: 'Options', menu: true },
  { icon: 'press', label: 'Macro' },
  { icon: 'people', label: 'Community' },
  { icon: 'oneToOne', label: 'Actual size' },
  { icon: 'sparrow', label: 'Add-in' },
  { icon: 'exp', label: 'Export' },
  { icon: 'sheetDoc', label: 'Export sheet' },
  { icon: 'dwgDoc', label: 'Export DXG' },
  { icon: 'saveCheck', label: 'Save and check' },
  { icon: 'dxfSearch', label: 'Find DXF' },
  { icon: 'expBpd', label: 'Export board' },
  { icon: 'checkBpd', label: 'Check board' },
];

const sketchTools = [
  ['line', true], ['circle', true], ['spline', true], ['planeGrid', false],
  ['rect', true], ['arc', true], ['ellipse', true], ['textA', false],
  ['slot', true], ['polygon', false], ['filletOff', true], ['point', false],
];

const tabs = ['Features', 'Sketch', 'Surfaces', 'Sheet Metal', 'Weldments', 'Markup', 'Evaluate', 'MBD Dimensions', 'Render Tools', 'SOLIDWORKS Add-Ins'];

const viewTools = [
  ['zoomFit'], ['zoomArea'], ['prevView'], ['section'], ['viewOrient', true],
  ['displayStyle', true], ['eye', true], ['ballPencil'], ['ballScene', true], ['monitor', true],
];

const tree = [
  { icon: 'history', text: 'History', arrow: 'right' },
  { icon: 'bodies', text: 'Solid Bodies(1)', arrow: 'right' },
  { icon: 'material', text: 'Material <not specified>' },
  { icon: 'plane', text: 'Front Plane (XY)', show: 'plane' },
  { icon: 'plane', text: 'Top Plane (XZ)', show: 'plane' },
  { icon: 'plane', text: 'Right Plane (YZ)', show: 'plane' },
  { icon: 'origin', text: 'Origin', show: 'origin' },
  { icon: 'axis', text: 'X Axis', show: 'axis' },
  { icon: 'axis', text: 'Y Axis', show: 'axis' },
  { icon: 'axis', text: 'Z Axis', show: 'axis' },
  { icon: 'extrude', text: 'Extrude-Thin1', arrow: 'down', selected: true },
  { icon: 'sketchNode', text: 'Sketch1', nested: true, show: 'sketchNode' },
  { icon: 'extrude', text: 'Extrude-Thin2', arrow: 'down' },
  { icon: 'sketchNode', text: 'Sketch2', nested: true, show: 'sketchNode' },
];

const renderTools = ['ballPencil', 'ballsArrow', 'pasteOff', 'scenePencil', 'decalPencil', 'target', 'previewWin', 'ballWin', 'blueBall', 'halfBall', 'fourBalls', 'ballGear', 'ballClock', 'ballBack'];
const noteTools = ['noteNew', 'noteEdit', 'noteArrow', 'notePlus', 'noteLights', 'noteSave', 'noteBorder', 'belt'];

const filterTools = [
  'fVertex', 'fEdge', 'fFace', 'fSurface', 'fSolid', 'fAxis', 'fPlane', 'fPoint', 'fSketch', 'fSegment',
  'fMidpoint', 'fCenter', 'fCenterline', 'fDim', 'fRough', 'fGtol', 'fNote', 'fDatum', 'fWeld', 'fBead',
  'fDatumTarget', 'fThread', 'fBlock', 'fMass', 'fRoute', 'fRoute2', 'fMeshFace', 'fMeshEdge', 'fMeshVertex',
];
const formatTools = ['layerPen', 'layers', 'lineColor', 'lineWeight', 'lineStyle', 'edgeShow', 'colorMode'];
const snapTools = ['sPoint', 'sCenter', 'sMid', 'sQuad', 'sIntersect', 'sNearest'];
const relationTools = ['sTangent', 'sPerp', 'sParallel', 'sHV', 'sHVPoints', 'sLength', 'sGrid', 'sAngle'];

/* ---------- small components ---------- */

const RibbonItem = ({ icon, lines, width, off, menu }) => (
  <RibbonButton $width={width} disabled={off}>
    <Icon name={icon} />
    <span>
      {lines.map(line => (
        <RibbonLine key={line}>{line}</RibbonLine>
      ))}
    </span>
    {menu ? <Caret $off={off} $bottom /> : null}
  </RibbonButton>
);

const ToolSet = ({ names, pitch = 27 }) =>
  names.map(name => (
    <ToolButton key={name} $width={pitch} aria-label={name}>
      <Icon name={name} />
    </ToolButton>
  ));

const CrumbArrow = ({ selected }) => (
  <svg width="11" height="22" viewBox="0 0 11 22" aria-hidden="true">
    {selected ? <path d="M0 0h11v22H0l11-11z" fill="#c9dff0" /> : null}
    <path d="M0 0l10 11L0 22" fill="none" stroke={selected ? '#8fb9da' : '#cfcfcf'} />
  </svg>
);

const Model = () => (
  <Canvas aria-label="Part1 model">
    <defs>
      <radialGradient id="shade" gradientUnits="userSpaceOnUse" cx="885" cy="605" r="190">
        <stop offset="0" stopColor="#5b5788" stopOpacity=".65" />
        <stop offset=".4" stopColor="#77739f" stopOpacity=".4" />
        <stop offset="1" stopColor="#9a98d2" stopOpacity="0" />
      </radialGradient>
      <radialGradient id="shadeEdge" gradientUnits="userSpaceOnUse" cx="1060" cy="710" r="230">
        <stop offset="0" stopColor="#86829f" stopOpacity=".35" />
        <stop offset="1" stopColor="#9a98d2" stopOpacity="0" />
      </radialGradient>
      <linearGradient id="rib" x1="0" y1="0" x2="1" y2="1">
        <stop offset="0" stopColor="#7d79b8" />
        <stop offset="1" stopColor="#5f5c8c" />
      </linearGradient>
    </defs>
    <g transform="translate(-344 -139)">
      <path d="M632 242L645 231 746 582 735 595Z" fill="#8a88ce" />
      <path d="M645 231L1329 501 1431 853 746 582Z" fill="#9b99d4" />
      <path d="M645 231L1329 501 1431 853 746 582Z" fill="url(#shade)" />
      <path d="M645 231L1329 501 1431 853 746 582Z" fill="url(#shadeEdge)" />
      <path d="M645 231L1329 501 1431 853M746 582L645 231 632 242 735 595 746 582" fill="none" stroke="#333" strokeWidth="1.300" />

      <path d="M860 596L932 531 946 560 869 631Z" fill="url(#rib)" />
      <path d="M869 631L860 596 932 531 946 536M932 531L935 540" fill="none" stroke="#222" strokeWidth="1.200" />

      <path d="M735 595L746 582 869 631 930 578 945 584 884 637 1431 853 1421 865Z" fill="#5bccff" stroke="#4aa3ff" strokeWidth="1.500" />
      <path d="M1421 865L1431 853" stroke="#333" />
      <path d="M735 595L803 621" stroke="#2b50e0" strokeDasharray="2 2" />

      <g stroke="#111" fill="none" strokeWidth="1.200">
        <path d="M735 594L846 490M849 491L1529 760M1431 852L1531 761" />
        <path d="M850 491l9 1.500-1 3zM1527 760l-9-1.500 1-3z" fill="#111" />
      </g>
      <g stroke="#0a0af0" fill="none" strokeWidth="1.200">
        <path d="M633 243L700 269 802 621" />
        <path d="M701 272l5 9-3 1zM802 621l-5-10 3-1z" fill="#0a0af0" />
        <path d="M1054 725L1099 684M1083 699L1087 716M1071 708L1075 724" />
        <path d="M1083 699l8-5-4 7zM1070 711l-8 4 5-7z" fill="#0a0af0" />
      </g>
      <path d="M1047 713L1070 699 1103 702 1085 723 1073 725Z" fill="#e4dcf8" opacity=".6" />
      <g fill="#0808c0" stroke="#000070">
        <circle cx="700" cy="269" r="3.500" /><circle cx="846" cy="490" r="4" />
        <circle cx="1531" cy="761" r="4" /><circle cx="1083" cy="698" r="4" />
      </g>

      <g fill="#f39a1e" stroke="#4a3209" strokeWidth="1">
        <path d="M874 645h2l8 29 4-1-2 13-7-9 4-2z" />
        <path d="M1070 727l-31-11-1 4-11-11 13-1-1 4 31 12z" />
        <path d="M1084 722l26-24-3-3 14-6-6 12-3-2-26 24z" />
      </g>
      <circle cx="1077" cy="729" r="5.500" fill="#fff" />

      <DimText transform="translate(749 432) rotate(73)" fill="#0a0af0">50.00</DimText>
      <DimText transform="translate(1174 618) rotate(21)" fill="#111">100.00</DimText>
      <DimText transform="translate(1069 710) rotate(-42)" fill="#0a0af0">2.00</DimText>
      <AxisText x="1014" y="706">X</AxisText>
      <AxisText x="1130" y="680">Y</AxisText>

      <g strokeWidth="2.500">
        <path d="M384 915L380 899" stroke="#1c9e1c" /><path d="M378 891l-3 8 7-1z" fill="#1c9e1c" />
        <path d="M384 915L370 910" stroke="#e01818" /><path d="M362 908l10-2-3 8z" fill="#e01818" />
        <path d="M384 915L370 927" stroke="#1a1ac4" /><path d="M364 932l4-8 5 6z" fill="#1a1ac4" />
      </g>
      <TriadText x="374" y="887" fill="#2fc12f">Y</TriadText>
      <TriadText x="356" y="904" fill="#e01818">X</TriadText>
      <TriadText x="358" y="935" fill="#1a1ac4">Z</TriadText>
    </g>
  </Canvas>
);

/* ---------- app ---------- */

const App = () => (
  <Page>
    <GlobalStyle />
    <TitleBar>
      <Logo>
        <svg width="23" height="24" viewBox="0 0 23 24" aria-hidden="true">
          <path d="M5 3q5-2 8-1.500T9 8q4 .5 2.500 4.500T2 21q3-4 4-9" fill="none" stroke="#da291c" strokeWidth="1.800" />
          <path d="M20.500 9q-5-.5-5.500 2t3.500 4-5 5" fill="none" stroke="#da291c" strokeWidth="2" />
        </svg>
        <Wordmark>
          <b>SOLID</b>WORKS
        </Wordmark>
      </Logo>
      <Menu>
        {menus.map(name => (
          <MenuButton key={name}>{name}</MenuButton>
        ))}
      </Menu>
      <PinButton aria-label="Pin menu">
        <Icon name="pin" size={16} />
      </PinButton>
      <QuickBar>
        {quickAccess.map(item => (
          <QuickItem key={item.label} $active={item.active}>
            <ToolButton $width={item.active ? 29 : 30} $pressed={item.active} aria-label={item.label}>
              <Icon name={item.icon} />
            </ToolButton>
            {item.menu ? (
              <CaretButton $active={item.active} aria-label={`${item.label} menu`}>
                <Caret />
              </CaretButton>
            ) : null}
          </QuickItem>
        ))}
      </QuickBar>
      <DocTitle>Part1 *</DocTitle>
      <SearchBox>
        <Icon name="terminal" size={16} />
        <input aria-label="Search Commands" placeholder="Search Commands" />
        <Icon name="search" size={16} />
        <Caret />
      </SearchBox>
      <WindowControls>
        {['user', 'help', 'minimize', 'resize', 'restore', 'close'].map(name => (
          <ToolButton key={name} $width={20} aria-label={name}>
            <Icon name={name} />
          </ToolButton>
        ))}
      </WindowControls>
    </TitleBar>

    <Ribbon>
      <RibbonGroup $end={8}>
        <RibbonItem icon="sketch" lines={['Sketch']} width={56} menu />
        <RibbonItem icon="smartDim" lines={['Smart', 'Dimension']} width={52} menu />
      </RibbonGroup>
      <EntityGrid>
        {sketchTools.map(([name, menu]) => (
          <EntityCell key={name}>
            <ToolButton $width={26} aria-label={name}>
              <Icon name={name} size={18} />
            </ToolButton>
            {menu ? <Caret $off={name === 'filletOff'} /> : null}
          </EntityCell>
        ))}
      </EntityGrid>
      <RibbonGroup>
        <RibbonItem icon="trim" lines={['Trim', 'Entities']} width={50} off menu />
        <RibbonItem icon="convert" lines={['Convert', 'Entities']} width={48} menu />
        <RibbonItem icon="offset" lines={['Offset', 'Entities']} width={50} off />
        <RibbonItem icon="offsetSurface" lines={['Offset', 'On', 'Surface']} width={46} />
        <RibbonList>
          <ListButton disabled>
            <Icon name="mirror" size={18} />
            <span>Mirror Entities</span>
          </ListButton>
          <ListButton disabled>
            <Icon name="pattern" size={18} />
            <span>Linear Sketch Pattern</span>
            <Caret $off />
          </ListButton>
          <ListButton disabled>
            <Icon name="move" size={18} />
            <span>Move Entities</span>
            <Caret $off />
          </ListButton>
        </RibbonList>
      </RibbonGroup>
      <RibbonGroup>
        <RibbonItem icon="relations" lines={['Display/Delete', 'Relations']} width={87} off menu />
        <RibbonItem icon="repair" lines={['Repair', 'Sketch']} width={43} off />
      </RibbonGroup>
      <RibbonGroup>
        <RibbonItem icon="snaps" lines={['Quick', 'Snaps']} width={44} off menu />
      </RibbonGroup>
      <RibbonGroup $last>
        <RibbonItem icon="rapid" lines={['Rapid', 'Sketch']} width={46} />
        <RibbonItem icon="instant" lines={['Instant2D']} width={58} />
        <RibbonItem icon="shaded" lines={['Shaded', 'Sketch', 'Contours']} width={60} off />
        <RibbonItem icon="picture" lines={['Sketch', 'Picture']} width={44} off />
        <RibbonItem icon="fitSpline" lines={['Fit', 'Spline']} width={44} off />
      </RibbonGroup>
      <CollapseButton aria-label="Collapse ribbon">
        <Icon name="chevronUp" />
      </CollapseButton>
    </Ribbon>

    <Body>
      <Main>
        <TabRow>
          {tabs.map(name => (
            <Tab key={name} $active={name === 'Sketch'}>
              {name}
            </Tab>
          ))}
          <ViewTools>
            {viewTools.map(([name, menu]) => (
              <React.Fragment key={name}>
                <ToolButton $width={26} aria-label={name}>
                  <Icon name={name} />
                </ToolButton>
                {menu ? <Caret $off $wide /> : null}
              </React.Fragment>
            ))}
          </ViewTools>
          <DocControls>
            <ToolSet names={['paneLeft', 'paneRight', 'docMin', 'docRestore', 'docClose']} pitch={26} />
          </DocControls>
        </TabRow>

        <Workspace>
          <Panel>
            <PanelGrip>
              <Dot />
            </PanelGrip>
            <PanelTabs>
              {['part', 'property', 'config', 'dimX', 'ballDark'].map(name => (
                <PanelTab key={name} $active={name === 'part'} aria-label={name}>
                  <Icon name={name} />
                </PanelTab>
              ))}
              <PaneIcons>
                <ToolSet names={['chevronLeft', 'hide', 'cubeBlue', 'ballPencil', 'partsEye']} pitch={25} />
              </PaneIcons>
            </PanelTabs>
            <TreeArea>
              <Tree>
                <FilterBox>
                  <Icon name="filter" size={18} />
                  <input aria-label="Filter tree" />
                </FilterBox>
                <RootNode>
                  <Icon name="part" size={18} />
                  <span>Part1</span>
                </RootNode>
                {tree.map(node => (
                  <TreeRow key={node.text} $nested={node.nested}>
                    <Expander>
                      {node.arrow === 'right' ? <path d="M9 4l4 4-4 4z" fill="#555" /> : null}
                      {node.arrow === 'down' ? <path d="M7 7h8l-4 4z" fill="#555" /> : null}
                    </Expander>
                    <NodeLabel $selected={node.selected}>
                      <Icon name={node.icon} size={18} />
                      {node.text}
                    </NodeLabel>
                  </TreeRow>
                ))}
                <RollbackBar />
              </Tree>
              <DisplayPane>
                <DisplayRow $height={26}>
                  <i /><i /><i /><i />
                </DisplayRow>
                <DisplayRow $height={22}>
                  <i /><i />
                  <i>
                    <Swatch>
                      <svg width="18" height="18" viewBox="0 0 20 20" aria-hidden="true">
                        <circle cx="10" cy="10" r="8.500" fill="#6a6af0" />
                        <circle cx="7" cy="6.500" r="3" fill="#d9d9ff" />
                      </svg>
                    </Swatch>
                  </i>
                  <i />
                </DisplayRow>
                {tree.map(node =>
                  node.selected ? (
                    <SelectedCells key={node.text} />
                  ) : (
                    <DisplayRow key={node.text} $height={22}>
                      <i>{node.show ? <Icon name={node.show} size={18} /> : null}</i>
                      <i /><i /><i />
                    </DisplayRow>
                  )
                )}
                <DisplayRow $fill>
                  <i /><i /><i /><i />
                </DisplayRow>
              </DisplayPane>
            </TreeArea>
            <PanelFoot />
          </Panel>

          <Viewport>
            <Model />
            <SplitHandle>
              <Dot />
            </SplitHandle>
            <Breadcrumbs>
              <Crumb $first>
                <Icon name="partFaded" size={18} />
              </Crumb>
              <CrumbArrow />
              <Crumb>
                <Icon name="boxFaded" size={18} />
              </Crumb>
              <CrumbArrow />
              <Crumb>
                <Icon name="extrudeFaded" size={18} />
                <span>Extrude-Thin1</span>
              </Crumb>
              <CrumbArrow selected />
              <Crumb $selected>
                <Icon name="face" size={18} />
              </Crumb>
            </Breadcrumbs>
            <SubCrumb>
              <Icon name="hookArrow" size={16} />
              <SketchCrumb>
                <Icon name="sketchNodeFaded" size={18} />
                Sketch1
              </SketchCrumb>
            </SubCrumb>

            <TaskPane>
              {['home', 'library', 'folder', 'palette', 'ball', 'list'].map(name => (
                <TaskTab key={name} $active={name === 'home'} aria-label={name}>
                  <Icon name={name} size={18} />
                </TaskTab>
              ))}
            </TaskPane>

            <ContextBar>
              <ContextRow>
                <ToolSet names={['editFeature']} pitch={30} />
                <HotButton aria-label="Edit Sketch">
                  <Icon name="editSketch" />
                </HotButton>
                <ToolSet names={['insertPart', 'suppress', 'rollback', 'ballPencil']} pitch={30} />
                <Caret $wide />
                <ToolSet names={['ballsArrow']} pitch={30} />
              </ContextRow>
              <ContextRow>
                <ToolSet names={['selectOther', 'newSketch', 'hideBody', 'zoomSel', 'normalTo', 'fillet', 'chamfer']} pitch={30} />
              </ContextRow>
              <Tooltip role="tooltip">Edit Sketch</Tooltip>
            </ContextBar>
          </Viewport>
        </Workspace>

        <SheetTabs>
          <SheetNav>
            {['M5 3v8M11 3L7 7l4 4z', 'M10 3L5 7l5 4z', 'M5 3l5 4-5 4z', 'M4 3l4 4-4 4zM10 3v8'].map(d => (
              <button key={d} aria-label="Scroll tabs">
                <svg width="14" height="14" viewBox="0 0 15 14">
                  <path d={d} fill="#888" stroke="#888" />
                </svg>
              </button>
            ))}
          </SheetNav>
          <SheetTab $active>Model</SheetTab>
          <SheetTab>Motion Study 1</SheetTab>
        </SheetTabs>
      </Main>

      <SideBar>
        <SideGrip />
        <SideTools>
          {renderTools.map(name => (
            <SideButton key={name} aria-label={name}>
              <Icon name={name} size={19} />
            </SideButton>
          ))}
        </SideTools>
        <SideGrip />
        <SideTools $notes>
          {noteTools.map(name => (
            <SideButton key={name} aria-label={name}>
              <Icon name={name} size={19} />
            </SideButton>
          ))}
        </SideTools>
      </SideBar>
    </Body>

    <BottomBar>
      <BarGrip $wide />
      <ToolSet names={['funnelOff', 'funnelsOff', 'funnelsOn']} />
      <QuickItem $active>
        <ToolButton $width={28} $pressed aria-label="Select">
          <Icon name="cursor" />
        </ToolButton>
        <CaretButton $active aria-label="Select menu">
          <Caret />
        </CaretButton>
      </QuickItem>
      <ToolSet names={['cursors']} />
      <BarLine />
      <ToolSet names={filterTools} />
      <BarLine $full />
      <BarGrip />
      <ToolSet names={formatTools} />
      <BarLine $full />
      <BarGrip />
      <ToolSet names={snapTools} />
      <BarLine />
      <ToolSet names={relationTools} />
      <BarLine $full />
    </BottomBar>

    <StatusBar>
      <span>Edit Sketch.</span>
      <StatusMode>Editing Part</StatusMode>
      <StatusUnits>
        MMGS
        <svg width="8" height="6" viewBox="0 0 8 6" aria-hidden="true">
          <path d="M1 5l3-4 3 4z" fill="#222" />
        </svg>
      </StatusUnits>
      <Icon name="tag" size={16} />
    </StatusBar>
  </Page>
);

export default App;

/* ---------- styles ---------- */

const GlobalStyle = createGlobalStyle`
  * {
    box-sizing: border-box;
  }

  body {
    margin: 0;
    background: #f7f7f7;
    color: #111;
    font-family: 'Open Sans', 'Noto Sans', sans-serif;
    font-size: 11px;
    line-height: 13px;
  }

  button,
  input {
    margin: 0;
    padding: 0;
    border: 0;
    background: none;
    color: inherit;
    font: inherit;
  }

  svg {
    display: block;
    flex: none;
  }
`;

const Page = styled.div`
  display: flex;
  flex-direction: column;
  min-height: 100vh;
  overflow: hidden;
  white-space: nowrap;
`;

const TitleBar = styled.header`
  display: flex;
  align-items: center;
  height: 35px;
  border-top: 1px solid #888;
  border-bottom: 1px solid #888;
`;

const Logo = styled.div`
  display: flex;
  align-items: center;
  gap: 3px;
  width: 135px;
  padding-left: 4px;
`;

const Wordmark = styled.span`
  color: #da291c;
  font-family: Lato, sans-serif;
  font-size: 13px;
  font-style: italic;

  b {
    font-weight: 900;
  }
`;

const Menu = styled.nav`
  display: flex;
  width: 357px;
`;

const MenuButton = styled.button`
  padding: 0 8px;
`;

const PinButton = styled.button`
  display: flex;
  align-items: center;
  width: 21px;
  height: 33px;
  border-right: 1px solid #bbb;
`;

const QuickBar = styled.div`
  display: flex;
  align-items: center;
  padding-left: 16px;
`;

const QuickItem = styled.div`
  display: flex;
  align-items: center;
  height: 30px;
  border: ${props => (props.$active ? '1px solid #8a8a8a' : '0')};
`;

const ToolButton = styled.button`
  display: flex;
  align-items: center;
  justify-content: center;
  flex: none;
  width: ${props => props.$width}px;
  height: ${props => (props.$pressed ? '28px' : '22px')};
  background: ${props => (props.$pressed ? '#b0b0b0' : 'none')};
`;

const CaretButton = styled.button`
  display: flex;
  align-items: center;
  justify-content: center;
  width: ${props => (props.$active ? '12px' : '14px')};
  height: 28px;
  border-left: ${props => (props.$active ? '1px solid #8a8a8a' : '0')};
`;

const Caret = styled.i`
  flex: none;
  width: 6px;
  height: 4px;
  margin: ${props => (props.$wide ? '0 4px' : '0')};
  margin-top: ${props => (props.$bottom ? 'auto' : '0')};
  background: ${props => (props.$off ? '#8f8f8f' : '#333')};
  clip-path: polygon(0 0, 100% 0, 50% 100%);
`;

const DocTitle = styled.div`
  flex: 1;
  text-align: center;
`;

const SearchBox = styled.label`
  display: flex;
  align-items: center;
  gap: 6px;
  width: 202px;
  height: 22px;
  padding: 0 4px;
  border: 1px solid #b5b5b5;
  background: #fff;

  input {
    flex: 1;
    min-width: 0;
    outline: 0;
  }

  input::placeholder {
    color: #444;
    opacity: 1;
  }
`;

const WindowControls = styled.div`
  display: flex;
  justify-content: space-between;
  width: 216px;
  padding: 0 5px 0 11px;
`;

const Ribbon = styled.section`
  display: flex;
  height: 82px;
  border-bottom: 1px solid #888;
`;

const RibbonGroup = styled.div`
  display: flex;
  margin: 1px 0 2px;
  padding-right: ${props => props.$end || 0}px;
  border-right: ${props => (props.$last ? '0' : '1px solid #c4c4c4')};
`;

const RibbonButton = styled.button`
  display: flex;
  flex-direction: column;
  align-items: center;
  width: ${props => props.$width}px;
  padding: 5px 0 10px;

  &:disabled {
    color: #b4b4b4;
  }
`;

const RibbonLine = styled.span`
  display: block;
`;

const EntityGrid = styled.div`
  display: grid;
  grid-template-columns: 40px 40px 40px 26px;
  grid-auto-rows: 26px;
  margin: 1px 0 2px;
  padding: 0 1px;
  border-right: 1px solid #c4c4c4;
`;

const EntityCell = styled.div`
  display: flex;
  align-items: center;
  gap: 4px;
`;

const RibbonList = styled.div`
  display: grid;
  grid-auto-rows: 26px;
  width: 176px;
`;

const ListButton = styled.button`
  display: flex;
  align-items: center;
  gap: 7px;
  padding: 0 6px 2px 3px;
  text-align: left;

  span {
    flex: 1;
  }

  &:disabled {
    color: #b4b4b4;
  }
`;

const CollapseButton = styled.button`
  align-self: flex-end;
  margin-left: auto;
  padding: 0 4px 3px;
`;

const Body = styled.div`
  display: flex;
  flex: 1;
`;

const Main = styled.div`
  display: flex;
  flex-direction: column;
  flex: 1;
  min-width: 0;
`;

const TabRow = styled.div`
  position: relative;
  z-index: 1;
  display: flex;
  height: 22px;
  background: #fff;
`;

const Tab = styled.button`
  padding: 0 8px;
  border-right: 1px solid #888;
  border-bottom: 1px solid ${props => (props.$active ? '#f7f7f7' : '#888')};
  background: ${props => (props.$active ? '#f7f7f7' : '#d3d3d3')};
  font-weight: ${props => (props.$active ? 700 : 400)};
`;

const ViewTools = styled.div`
  display: flex;
  align-items: center;
  height: 30px;
  margin-left: 183px;
`;

const DocControls = styled.div`
  display: flex;
  align-items: center;
  height: 30px;
  margin-left: auto;
  padding-right: 6px;
`;

const Workspace = styled.div`
  display: flex;
  flex: 1;
`;

const Panel = styled.aside`
  display: flex;
  flex-direction: column;
  width: 344px;
  padding-top: 3px;
  border-top: 1px solid #888;
  border-right: 1px solid #888;
  background: #f7f7f7;
`;

const PanelGrip = styled.div`
  display: flex;
  align-items: center;
  justify-content: center;
  height: 16px;
  margin-right: 3px;
  border-top: 1px solid #c4c4c4;
  border-bottom: 1px solid #c4c4c4;
`;

const Dot = styled.i`
  width: 6px;
  height: 6px;
  border: 1px solid #888;
  border-radius: 50%;
  background: #ddd;
`;

const PanelTabs = styled.div`
  display: flex;
  height: 27px;
  margin: 3px 2px 0;
  border-bottom: 1px solid #a5a5a5;
`;

const PanelTab = styled.button`
  display: flex;
  align-items: center;
  justify-content: center;
  width: 40px;
  border-top: 1px solid #888;
  border-right: 1px solid #888;
  background: ${props => (props.$active ? '#f7f7f7' : '#d3d3d3')};
`;

const PaneIcons = styled.div`
  display: flex;
  align-items: center;
  margin-left: auto;
`;

const TreeArea = styled.div`
  display: flex;
  flex: 1;
  margin-right: 3px;
  border-left: 1px solid #c4c4c4;
`;

const Tree = styled.div`
  width: 239px;
  border-right: 1px solid #c4c4c4;
`;

const FilterBox = styled.label`
  display: flex;
  align-items: center;
  height: 25px;
  margin: 0 4px 2px;
  padding-left: 2px;
  border: 1px solid #c4c4c4;

  input {
    flex: 1;
    min-width: 0;
  }
`;

const RootNode = styled.div`
  display: flex;
  align-items: center;
  gap: 4px;
  height: 21px;
  padding-left: 3px;
  border-bottom: 3px solid #e5a92e;
`;

const TreeRow = styled.div`
  display: flex;
  height: 22px;
  padding-left: ${props => (props.$nested ? '23px' : '0')};
`;

const Expander = styled.svg.attrs({ width: 23, height: 16, viewBox: '0 0 23 16', 'aria-hidden': true })``;

const NodeLabel = styled.button`
  display: flex;
  align-items: center;
  gap: 5px;
  padding: 0 5px 0 2px;
  border: 1px solid ${props => (props.$selected ? '#3d86bd' : 'transparent')};
  background: ${props => (props.$selected ? '#a8c7e3' : 'none')};
`;

const RollbackBar = styled.div`
  height: 3px;
  background: #338ac2;
`;

const DisplayPane = styled.div`
  display: flex;
  flex-direction: column;
  flex: 1;
`;

const DisplayRow = styled.div`
  display: grid;
  grid-template-columns: 28px 24px 24px 1fr;
  flex: ${props => (props.$fill ? '1' : 'none')};
  height: ${props => (props.$fill ? 'auto' : `${props.$height}px`)};

  > i {
    display: flex;
    align-items: center;
    justify-content: center;
    border-right: 1px solid #c4c4c4;
  }

  > i:last-child {
    border-right: 0;
  }
`;

const Swatch = styled.span`
  padding: 1px;
  border: 1px solid #000;
  background: #fff;
`;

const SelectedCells = styled.div`
  height: 22px;
  margin: 0 1px 0 2px;
  border: 1px solid #3d86bd;
  background: #a8c7e3;
`;

const PanelFoot = styled.div`
  height: 5px;
  margin-right: 3px;
  border-top: 1px solid #c4c4c4;
  border-bottom: 1px solid #c4c4c4;
`;

const Viewport = styled.main`
  position: relative;
  flex: 1;
  background: #fff;
`;

const Canvas = styled.svg`
  position: absolute;
  inset: 0;
  width: 100%;
  height: 100%;
`;

const DimText = styled.text`
  font-family: 'Open Sans', sans-serif;
  font-size: 15px;
  font-style: italic;
  font-weight: 300;
`;

const AxisText = styled.text`
  font-size: 11px;
  fill: #111;
`;

const TriadText = styled.text`
  font-size: 8px;
  font-weight: 700;
`;

const SplitHandle = styled.div`
  position: absolute;
  top: 386px;
  left: 0;
  display: flex;
  align-items: center;
  width: 8px;
  height: 38px;
  border: 1px solid #888;
  border-left: 0;
  background: #f7f7f7;
`;

const Breadcrumbs = styled.nav`
  position: absolute;
  top: 17px;
  left: 14px;
  display: flex;
  height: 24px;
  border: 1px solid #cfcfcf;
  background: #f9f9f9;
`;

const Crumb = styled.span`
  display: flex;
  align-items: center;
  gap: 6px;
  padding-left: ${props => (props.$first ? '13px' : '3px')};
  padding-right: ${props => (props.$selected ? '12px' : '0')};
  background: ${props => (props.$selected ? '#c9dff0' : 'none')};
`;

const SubCrumb = styled.div`
  position: absolute;
  top: 46px;
  left: 132px;
  display: flex;
  align-items: center;
  gap: 3px;
`;

const SketchCrumb = styled.span`
  display: flex;
  align-items: center;
  gap: 6px;
  height: 24px;
  padding: 0 2px;
  border: 1px solid #cfcfcf;
  background: #fafafa;
`;

const TaskPane = styled.div`
  position: absolute;
  top: 53px;
  right: 0;
  border: 1px solid #888;
  border-right: 0;
`;

const TaskTab = styled.button`
  display: flex;
  align-items: center;
  justify-content: center;
  width: 25px;
  height: 24px;
  border-bottom: 1px solid #888;
  background: ${props => (props.$active ? '#f7f7f7' : '#d3d3d3')};

  &:last-child {
    border-bottom: 0;
  }
`;

const ContextBar = styled.div`
  position: absolute;
  top: 397px;
  left: 570px;
  width: 236px;
  height: 67px;
  padding: 2px 3px;
  border: 1px solid #999;
  background: #f7f7f7;
`;

const ContextRow = styled.div`
  display: flex;
  align-items: center;
  height: 30px;
`;

const HotButton = styled.button`
  display: flex;
  align-items: center;
  justify-content: center;
  width: 30px;
  height: 30px;
  border: 1px solid #a5a5a5;
  background: #fff;
`;

const Tooltip = styled.div`
  position: absolute;
  top: 49px;
  left: 44px;
  padding: 2px 6px 3px;
  border: 1px solid #777;
  background: #fff;
  box-shadow: 3px 3px 2px rgba(0, 0, 0, 0.35);
  color: #555;
`;

const SheetTabs = styled.div`
  display: flex;
  height: 15px;
  border-top: 1px solid #888;
  border-right: 1px solid #9fb0b5;
  background: #f7f7f7;
`;

const SheetNav = styled.div`
  display: flex;
  margin-left: 27px;
  background: #a9a9a9;

  button {
    width: 16px;
    height: 14px;
    border-right: 1px solid #888;
  }
`;

const SheetTab = styled.button`
  padding: 0 ${props => (props.$active ? '9px' : '18px')} 2px ${props => (props.$active ? '14px' : '9px')};
  border-right: 1px solid #888;
  background: ${props => (props.$active ? '#f7f7f7' : '#d3d3d3')};
  font-weight: ${props => (props.$active ? 700 : 400)};
`;

const SideBar = styled.aside`
  width: 33px;
  padding-left: 3px;
  background: #f7f7f7;
`;

const SideGrip = styled.div`
  height: 3px;
  margin: 3px 0 6px 3px;
  background: repeating-linear-gradient(90deg, #999 0 2px, transparent 2px 4px);
`;

const SideTools = styled.div`
  padding: ${props => (props.$notes ? '4px 0 7px' : '0 0 7px')};
  border-bottom: 1px solid #888;
`;

const SideButton = styled.button`
  display: flex;
  align-items: center;
  justify-content: center;
  width: 30px;
  height: 26px;
`;

const BottomBar = styled.div`
  display: flex;
  align-items: center;
  height: 34px;
  border-bottom: 1px solid #888;
`;

const BarGrip = styled.i`
  width: 3px;
  height: 26px;
  margin: ${props => (props.$wide ? '0 7px 0 3px' : '0 8px 0 3px')};
  background: repeating-linear-gradient(#999 0 2px, transparent 2px 4px);
`;

const BarLine = styled.i`
  width: 1px;
  height: ${props => (props.$full ? '31px' : '24px')};
  margin: ${props => (props.$full ? '2px 0 0 7px' : '0 5px 0 2px')};
  background: #888;
`;

const StatusBar = styled.footer`
  display: flex;
  align-items: center;
  height: 18px;
  padding: 0 3px 2px 1px;
`;

const StatusMode = styled.span`
  width: 179px;
  margin-left: auto;
`;

const StatusUnits = styled.span`
  display: flex;
  align-items: center;
  gap: 18px;
  width: 86px;
`;
